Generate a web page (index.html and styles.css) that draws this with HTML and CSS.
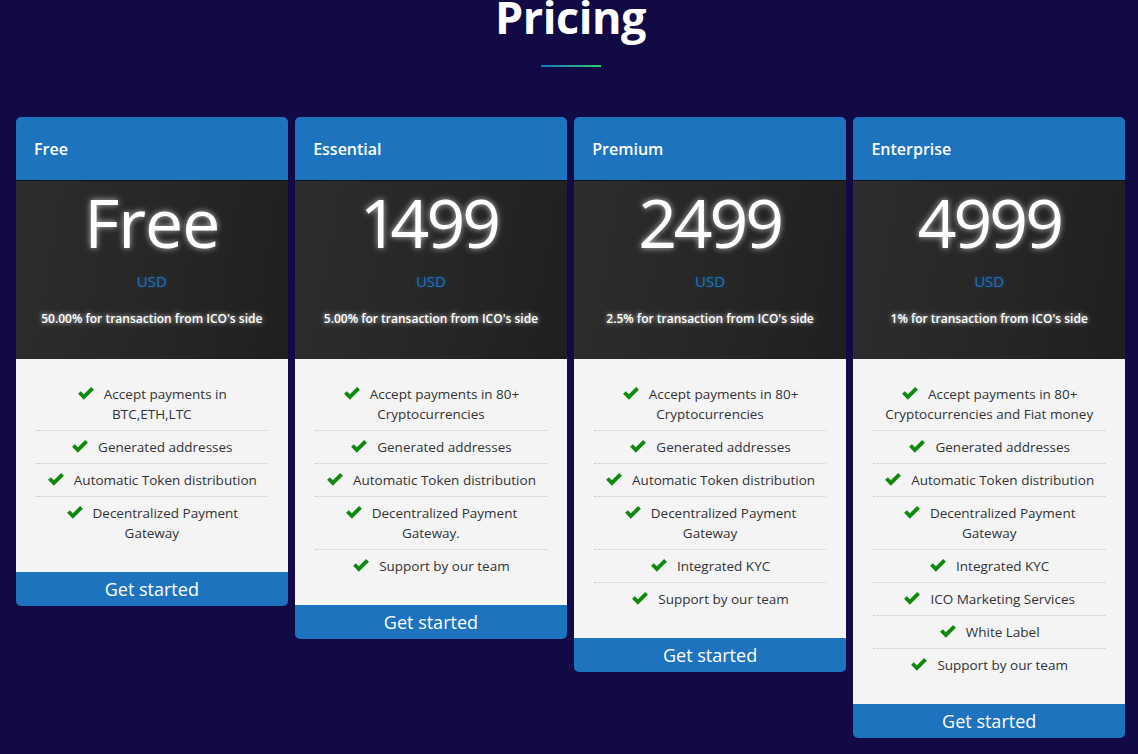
FILE: index.html
```html
<!DOCTYPE html>
<html>
<head>
<meta charset="utf-8">
<link rel="stylesheet" href="styles.css">
</head>
<body>
<section class="pricing">
  <h1 class="title">Pricing</h1>
  <div class="underline"></div>
  <div class="plans">
    <div class="card">
      <div class="card-head">Free</div>
      <div class="card-price">
        <div class="amount">Free</div>
        <div class="currency">USD</div>
        <div class="fee">50.00% for transaction from ICO's side</div>
      </div>
      <ul class="features">
        <li><svg class="chk" viewBox="0 0 20 16"><path d="M1.2 8.3 L4.3 5.4 L7.6 8.8 L15.7 0.8 L18.8 3.8 L7.6 15 Z"/></svg>Accept payments in BTC,ETH,LTC</li>
        <li><svg class="chk" viewBox="0 0 20 16"><path d="M1.2 8.3 L4.3 5.4 L7.6 8.8 L15.7 0.8 L18.8 3.8 L7.6 15 Z"/></svg>Generated addresses</li>
        <li><svg class="chk" viewBox="0 0 20 16"><path d="M1.2 8.3 L4.3 5.4 L7.6 8.8 L15.7 0.8 L18.8 3.8 L7.6 15 Z"/></svg>Automatic Token distribution</li>
        <li><svg class="chk" viewBox="0 0 20 16"><path d="M1.2 8.3 L4.3 5.4 L7.6 8.8 L15.7 0.8 L18.8 3.8 L7.6 15 Z"/></svg>Decentralized Payment Gateway</li>
      </ul>
      <a class="btn">Get started</a>
    </div>
    <div class="card">
      <div class="card-head">Essential</div>
      <div class="card-price">
        <div class="amount num">1499</div>
        <div class="currency">USD</div>
        <div class="fee">5.00% for transaction from ICO's side</div>
      </div>
      <ul class="features">
        <li><svg class="chk" viewBox="0 0 20 16"><path d="M1.2 8.3 L4.3 5.4 L7.6 8.8 L15.7 0.8 L18.8 3.8 L7.6 15 Z"/></svg>Accept payments in 80+ Cryptocurrencies</li>
        <li><svg class="chk" viewBox="0 0 20 16"><path d="M1.2 8.3 L4.3 5.4 L7.6 8.8 L15.7 0.8 L18.8 3.8 L7.6 15 Z"/></svg>Generated addresses</li>
        <li><svg class="chk" viewBox="0 0 20 16"><path d="M1.2 8.3 L4.3 5.4 L7.6 8.8 L15.7 0.8 L18.8 3.8 L7.6 15 Z"/></svg>Automatic Token distribution</li>
        <li><svg class="chk" viewBox="0 0 20 16"><path d="M1.2 8.3 L4.3 5.4 L7.6 8.8 L15.7 0.8 L18.8 3.8 L7.6 15 Z"/></svg>Decentralized Payment Gateway.</li>
        <li><svg class="chk" viewBox="0 0 20 16"><path d="M1.2 8.3 L4.3 5.4 L7.6 8.8 L15.7 0.8 L18.8 3.8 L7.6 15 Z"/></svg>Support by our team</li>
      </ul>
      <a class="btn">Get started</a>
    </div>
    <div class="card">
      <div class="card-head">Premium</div>
      <div class="card-price">
        <div class="amount num">2499</div>
        <div class="currency">USD</div>
        <div class="fee">2.5% for transaction from ICO's side</div>
      </div>
      <ul class="features">
        <li><svg class="chk" viewBox="0 0 20 16"><path d="M1.2 8.3 L4.3 5.4 L7.6 8.8 L15.7 0.8 L18.8 3.8 L7.6 15 Z"/></svg>Accept payments in 80+ Cryptocurrencies</li>
        <li><svg class="chk" viewBox="0 0 20 16"><path d="M1.2 8.3 L4.3 5.4 L7.6 8.8 L15.7 0.8 L18.8 3.8 L7.6 15 Z"/></svg>Generated addresses</li>
        <li><svg class="chk" viewBox="0 0 20 16"><path d="M1.2 8.3 L4.3 5.4 L7.6 8.8 L15.7 0.8 L18.8 3.8 L7.6 15 Z"/></svg>Automatic Token distribution</li>
        <li><svg class="chk" viewBox="0 0 20 16"><path d="M1.2 8.3 L4.3 5.4 L7.6 8.8 L15.7 0.8 L18.8 3.8 L7.6 15 Z"/></svg>Decentralized Payment Gateway</li>
        <li><svg class="chk" viewBox="0 0 20 16"><path d="M1.2 8.3 L4.3 5.4 L7.6 8.8 L15.7 0.8 L18.8 3.8 L7.6 15 Z"/></svg>Integrated KYC</li>
        <li><svg class="chk" viewBox="0 0 20 16"><path d="M1.2 8.3 L4.3 5.4 L7.6 8.8 L15.7 0.8 L18.8 3.8 L7.6 15 Z"/></svg>Support by our team</li>
      </ul>
      <a class="btn">Get started</a>
    </div>
    <div class="card">
      <div class="card-head">Enterprise</div>
      <div class="card-price">
        <div class="amount num">4999</div>
        <div class="currency">USD</div>
        <div class="fee">1% for transaction from ICO's side</div>
      </div>
      <ul class="features">
        <li><svg class="chk" viewBox="0 0 20 16"><path d="M1.2 8.3 L4.3 5.4 L7.6 8.8 L15.7 0.8 L18.8 3.8 L7.6 15 Z"/></svg>Accept payments in 80+ Cryptocurrencies and Fiat money</li>
        <li><svg class="chk" viewBox="0 0 20 16"><path d="M1.2 8.3 L4.3 5.4 L7.6 8.8 L15.7 0.8 L18.8 3.8 L7.6 15 Z"/></svg>Generated addresses</li>
        <li><svg class="chk" viewBox="0 0 20 16"><path d="M1.2 8.3 L4.3 5.4 L7.6 8.8 L15.7 0.8 L18.8 3.8 L7.6 15 Z"/></svg>Automatic Token distribution</li>
        <li><svg class="chk" viewBox="0 0 20 16"><path d="M1.2 8.3 L4.3 5.4 L7.6 8.8 L15.7 0.8 L18.8 3.8 L7.6 15 Z"/></svg>Decentralized Payment Gateway</li>
        <li><svg class="chk" viewBox="0 0 20 16"><path d="M1.2 8.3 L4.3 5.4 L7.6 8.8 L15.7 0.8 L18.8 3.8 L7.6 15 Z"/></svg>Integrated KYC</li>
        <li><svg class="chk" viewBox="0 0 20 16"><path d="M1.2 8.3 L4.3 5.4 L7.6 8.8 L15.7 0.8 L18.8 3.8 L7.6 15 Z"/></svg>ICO Marketing Services</li>
        <li><svg class="chk" viewBox="0 0 20 16"><path d="M1.2 8.3 L4.3 5.4 L7.6 8.8 L15.7 0.8 L18.8 3.8 L7.6 15 Z"/></svg>White Label</li>
        <li><svg class="chk" viewBox="0 0 20 16"><path d="M1.2 8.3 L4.3 5.4 L7.6 8.8 L15.7 0.8 L18.8 3.8 L7.6 15 Z"/></svg>Support by our team</li>
      </ul>
      <a class="btn">Get started</a>
    </div>
  </div>
</section>
</body>
</html>
```
FILE: styles.css
```css
* { box-sizing: border-box; }
html, body {
  margin: 0;
  padding: 0;
  background: #110a45;
  height: 100%;
  overflow: hidden;
}
body {
  font-family: "Open Sans", "Noto Sans", sans-serif;
  color: #fff;
}
.pricing {
  padding: 0 13px 0 16px;
}
.title {
  margin: -13px 0 0;
  text-align: center;
  font-size: 45px;
  line-height: 60px;
  font-weight: 700;
  letter-spacing: -0.5px;
  color: #fff;
}
.underline {
  width: 60px;
  height: 2px;
  margin: 18px auto 0;
  background: linear-gradient(to right, #1e73be, #2ecc71);
}
.plans {
  display: flex;
  align-items: flex-start;
  gap: 7.5px;
  margin-top: 50px;
}
.card {
  flex: 1 1 0;
  border-radius: 5px;
  overflow: hidden;
  display: flex;
  flex-direction: column;
}
.card-head {
  background: #1e73be;
  height: 63px;
  padding: 0 18px;
  display: flex;
  align-items: center;
  font-size: 16px;
  font-weight: 600;
  color: #fff;
}
.card-price {
  border-top: 1px solid #111;
  background: linear-gradient(100deg, #2d2d2d 0%, #262626 55%, #1f1f1f 100%);
  text-align: center;
  height: 179px;
  padding-top: 1px;
}
.amount {
  font-size: 68px;
  line-height: 80px;
  font-weight: 500;
  letter-spacing: -1px;
  color: #fff;
  text-shadow: 0 0 6px rgba(255,255,255,0.7);
}
.amount.num {
  font-variant-numeric: proportional-nums;
  letter-spacing: -3px;
}
.currency {
  margin-top: 9px;
  font-size: 15px;
  line-height: 20px;
  color: #1e73be;
  text-shadow: 0 0 4px rgba(30,115,190,0.6);
}
.fee {
  margin-top: 18px;
  font-size: 12px;
  line-height: 20px;
  font-weight: 600;
  color: #fff;
  text-shadow: 0 0 5px rgba(255,255,255,0.8);
}
.features {
  list-style: none;
  margin: 0;
  background: #f4f4f4;
  padding: 19px 20px 23px;
}
.features li {
  text-align: center;
  color: #333;
  font-size: 13.5px;
  line-height: 20px;
  padding: 6px 8px;
  border-bottom: 1px dotted #c8c8c8;
}
.features li:last-child {
  border-bottom: none;
}
.chk {
  width: 18px;
  height: 15px;
  margin-right: 9px;
  vertical-align: -2px;
  fill: #0f8a0f;
}
.btn {
  display: block;
  background: #1e73be;
  color: #fff;
  text-align: center;
  font-size: 18px;
  line-height: 34px;
  height: 34px;
}
```
